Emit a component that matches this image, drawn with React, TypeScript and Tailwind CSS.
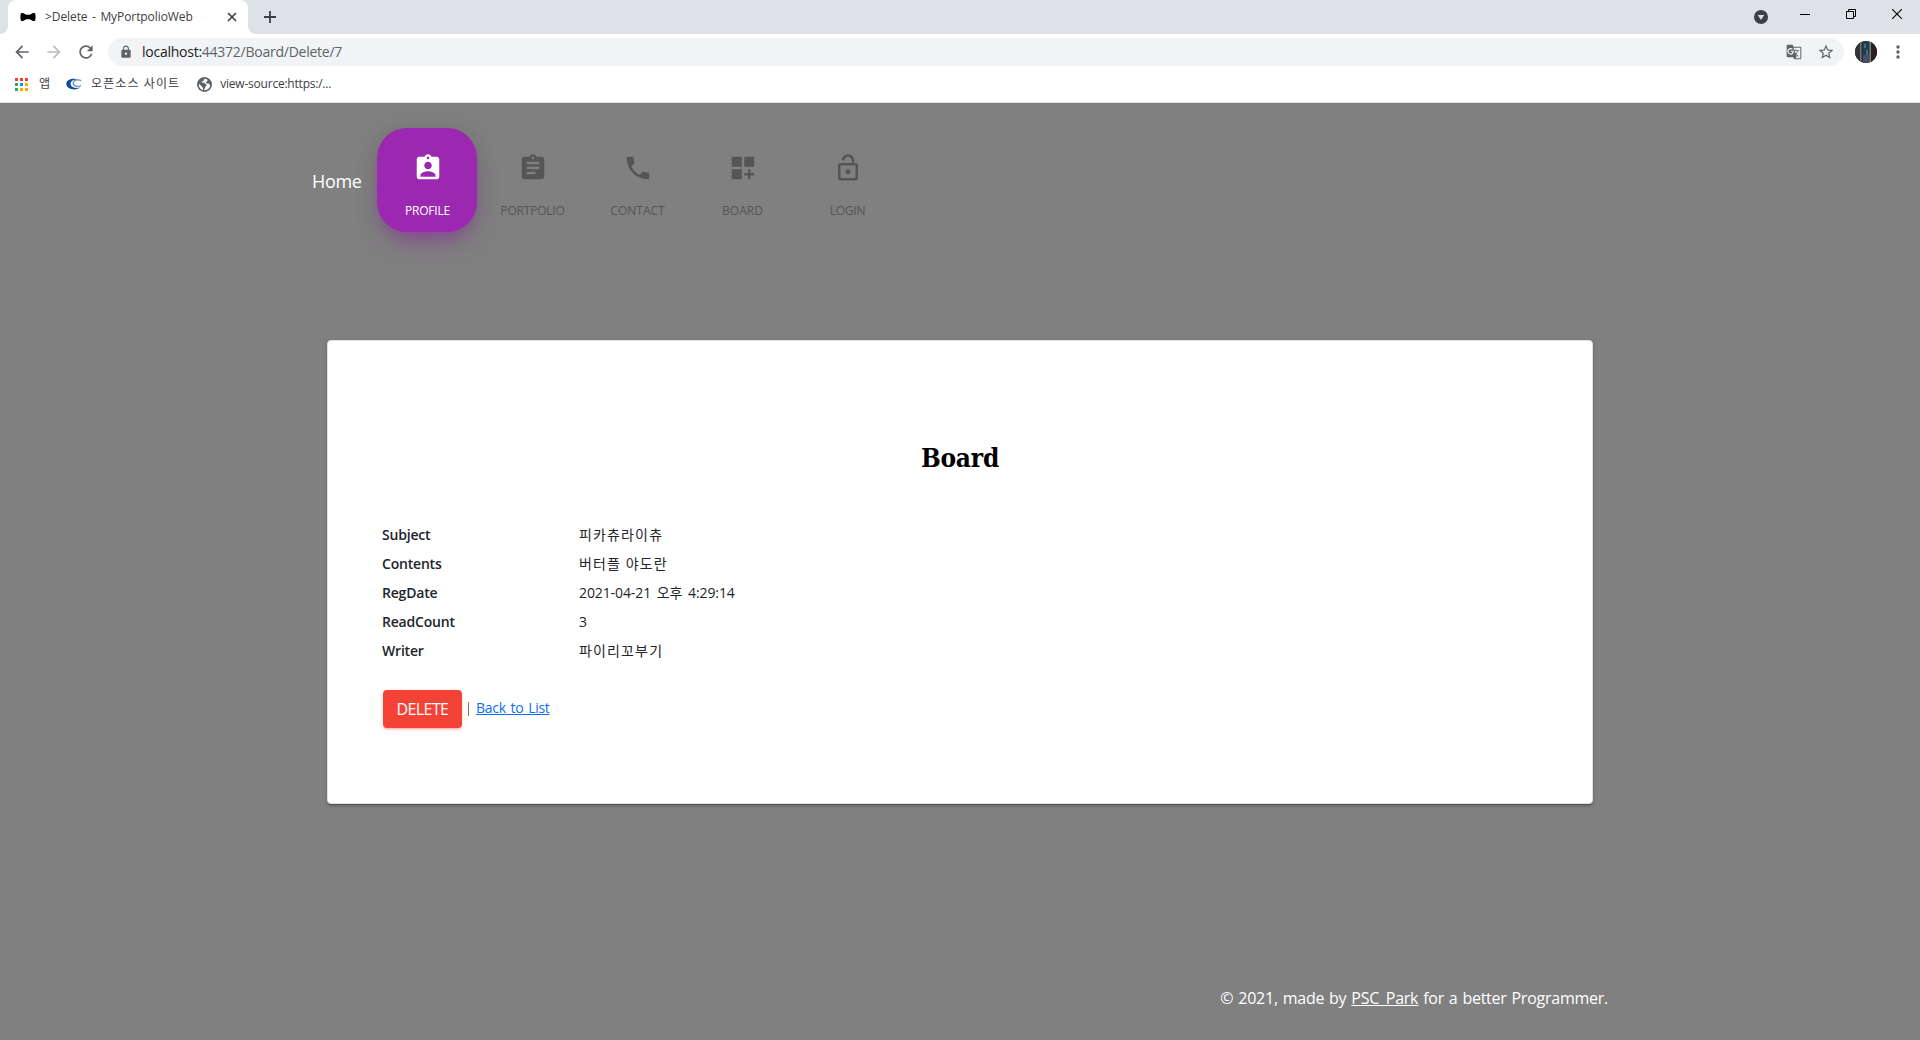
import type { ReactNode } from 'react';
import {
  MdArrowBack,
  MdArrowForward,
  MdAssignment,
  MdAssignmentInd,
  MdDashboardCustomize,
  MdGTranslate,
  MdLock,
  MdLockOpen,
  MdMoreVert,
  MdPhone,
  MdRefresh,
  MdStarBorder,
} from 'react-icons/md';

function BowTie() {
  return (
    <svg width="16" height="16" viewBox="0 0 16 16" className="shrink-0">
      <path
        d="M.6 5.200C.8 3.900 2 3.700 3 4.100l3.300 1.700h3.400L13 4.100c1-.4 2.200-.2 2.400 1.100.2 2 .2 3.600 0 5.600-.2 1.300-1.400 1.500-2.400 1.100L9.700 10.200H6.300L3 11.900c-1 .4-2.200.2-2.400-1.100-.2-2-.2-3.600 0-5.600z"
        fill="#000"
      />
    </svg>
  );
}

function Globe() {
  return (
    <svg width="15" height="15" viewBox="0 0 15 15" className="ml-[17px]">
      <circle cx="7.500" cy="7.500" r="7.200" fill="#5f6368" />
      <path
        d="M7.200 1.600c-.3 1 .4 1.500-.6 2.100-.8.500-1.900.3-1.900 1.200 0 1.200 2.900.3 3.300 1.500.2.800 1.800.6 1.800 1.700 0 .9-1.300 1-1.500 2-.2 1.300-1 2.500-1.900 3.200 3.600.5 6.900-2 7-5.600-.9.200-1.300-.8-2.200-1.200-.8-.4-2 .2-2.300-.8-.3-1 1.300-.9 1.500-1.800.1-.6-.3-1.100.1-1.600-1-.6-2.200-.8-3.300-.7z"
        fill="#fff"
      />
      <path d="M1.500 6.500l3.200 2.800c.4.400.2 1 .9 1.300.5.300.4 1.300.3 2.700-2.600-.6-4.900-3.500-4.400-6.800z" fill="#fff" />
      <circle cx="7.500" cy="7.500" r="6.600" fill="none" stroke="#5f6368" strokeWidth="1.500" />
    </svg>
  );
}

function TabStrip() {
  return (
    <div className="flex h-[34px] bg-[#dee1e6]">
      <div className="flex w-2 bg-white">
        <div className="w-2 rounded-br-[8px] bg-[#dee1e6]" />
      </div>
      <div className="flex h-[34px] w-[240px] items-center rounded-t-[8px] bg-white pr-[10px] pl-3">
        <BowTie />
        <span className="ml-[9px] flex-1 whitespace-nowrap text-[12px] tracking-[-0.080px] text-[#3c4043] [word-spacing:1.500px]">
          &gt;Delete - MyPortpolioWeb
        </span>
        <svg width="10" height="10" viewBox="0 0 10 10" className="mr-px">
          <path d="M1 1l8 8M9 1L1 9" stroke="#3c4043" strokeWidth="1.700" />
        </svg>
      </div>
      <div className="flex w-2 bg-white">
        <div className="w-2 rounded-bl-[8px] bg-[#dee1e6]" />
      </div>
      <svg width="12" height="12" viewBox="0 0 12 12" className="mt-[11px] ml-2">
        <path d="M6 0v12M0 6h12" stroke="#3c4043" strokeWidth="1.800" />
      </svg>
      <div className="ml-auto flex">
        <svg width="14" height="14" viewBox="0 0 14 14" className="mt-[10px] mr-8">
          <circle cx="7" cy="7" r="7" fill="#3c4043" />
          <path d="M3.800 5.100h6.400L7 10z" fill="#dee1e6" />
        </svg>
        <svg width="10" height="10" viewBox="0 0 10 10" className="mt-[9px] mr-9">
          <path d="M0 5.500h10" stroke="#000" />
        </svg>
        <svg width="10" height="10" viewBox="0 0 10 10" className="mt-[9px] mr-9" fill="none" stroke="#000">
          <path d="M.5 2.500h7v7h-7zM2.500 2.500v-2h7v7h-2" />
        </svg>
        <svg width="10" height="10" viewBox="0 0 10 10" className="mt-[9px] mr-[18px]">
          <path d="M0 0l10 10M10 0L0 10" stroke="#000" strokeWidth="1.100" />
        </svg>
      </div>
    </div>
  );
}

function Toolbar() {
  return (
    <div className="flex h-9 items-center bg-white text-[#5f6368]">
      <MdArrowBack className="ml-3 size-5" />
      <MdArrowForward className="ml-3 size-5 text-[#babcbe]" />
      <MdRefresh className="ml-3 size-5" />
      <div className="ml-3 flex h-7 w-[1736px] items-center rounded-full bg-[#f1f3f4] pl-[11px]">
        <MdLock className="size-[14px]" />
        <span className="-mt-px ml-[9px] whitespace-nowrap text-[14px] tracking-[-0.250px]">
          <span className="text-[#202124]">localhost:</span>44372/Board/Delete/7
        </span>
        <MdGTranslate className="ml-auto size-4" />
        <MdStarBorder className="mr-[9px] ml-[15px] size-[18px]" />
      </div>
      <svg width="22" height="22" viewBox="0 0 22 22" className="ml-[11px]">
        <defs>
          <clipPath id="avatar">
            <circle cx="11" cy="11" r="11" />
          </clipPath>
        </defs>
        <g clipPath="url(#avatar)">
          <path d="M0 0h22v22H0z" fill="#22303c" />
          <path d="M0 0h5v22H0z" fill="#30343b" />
          <path d="M5 0h1.500v22H5z" fill="#71746f" />
          <path d="M8 0h6v22H8z" fill="#203f4e" />
          <path d="M9 3h2v4H9zM11 9h2v5h-2z" fill="#407080" />
          <path d="M8 14h6v8H8z" fill="#4b4d6d" />
          <path d="M14.500 0H16v22h-1.500z" fill="#827f75" />
          <path d="M16 0h6v22h-6z" fill="#2c2022" />
        </g>
      </svg>
      <MdMoreVert className="ml-[11px] size-5" />
    </div>
  );
}

const appDots = ['#ea4335', '#ea4335', '#ea4335', '#34a853', '#1a8cff', '#fbab00', '#34a853', '#fbab00', '#fbab00'];

function Bookmarks() {
  return (
    <div className="flex h-[33px] items-center border-b border-[#dcdde0] bg-white pb-1 text-[12px] whitespace-nowrap text-[#3c4043]">
      <div className="ml-[15px] grid grid-cols-3 gap-[2px]">
        {appDots.map((c, i) => (
          <i key={i} className="size-[3px]" style={{ background: c }} />
        ))}
      </div>
      <span className="ml-[11px]">앱</span>
      <svg width="17" height="12" viewBox="0 0 17 12" className="ml-4" fill="none">
        <path
          d="M14 1.800C8.500-.6 0 .8.300 5.800.6 11.500 9.500 13 14.300 9.600 10 10.800 5 9.400 4.600 6 4.200 2.400 9.500.800 14 1.800z"
          fill="#134b9b"
        />
        <path d="M15.200 2.700C12 1 7.200 2 7.200 5.300c0 3 4.500 4.200 8 2.200" stroke="#7396c6" strokeWidth="1.400" />
      </svg>
      <span className="ml-2 tracking-[1.100px]">오픈소스 사이트</span>
      <Globe />
      <span className="ml-2 tracking-[-0.220px]">view-source:https:/...</span>
    </div>
  );
}

function NavItem({ icon, active, children }: { icon: ReactNode; active?: boolean; children: ReactNode }) {
  return (
    <a
      className={`flex h-[104px] w-[100px] flex-col items-center rounded-[30px] pl-px text-[12px] leading-[18px] ${
        active
          ? 'bg-[#9c27b0] text-white shadow-[0_16px_26px_-10px_rgba(156,39,176,0.56),0_4px_25px_0px_rgba(0,0,0,0.12),0_8px_10px_-5px_rgba(156,39,176,0.2)]'
          : 'text-[#555]'
      }`}
    >
      <span className="mt-[25px] h-[30px] text-[30px]">{icon}</span>
      <span className="mt-[19px]">{children}</span>
    </a>
  );
}

const rows = [
  ['Subject', '피카츄라이츄'],
  ['Contents', '버터플 야도란'],
  ['RegDate', '2021-04-21 오후 4:29:14'],
  ['ReadCount', '3'],
  ['Writer', '파이리꼬부기'],
];
const valueTracking = [
  'tracking-[1.150px]',
  'tracking-[1.100px]',
  'tracking-[-0.100px] [word-spacing:2.200px]',
  '',
  'tracking-[1.150px]',
];

export default function App() {
  return (
    <div className="flex h-[1040px] w-[1920px] flex-col overflow-hidden bg-[#808080] font-['Open_Sans','Noto_Sans_CJK_KR',sans-serif]">
      <TabStrip />
      <Toolbar />
      <Bookmarks />

      <nav className="mt-[25px] flex items-center pl-[312px]">
        <a className="mt-[2px] w-[65px] text-[18px] tracking-[-0.350px] text-white">Home</a>
        <div className="flex gap-[5px]">
          <NavItem active icon={<MdAssignmentInd />}>
            <span className="tracking-[-0.200px]">PROFILE</span>
          </NavItem>
          <NavItem icon={<MdAssignment />}>
            <span className="tracking-[-0.200px]">PORTPOLIO</span>
          </NavItem>
          <NavItem icon={<MdPhone />}>CONTACT</NavItem>
          <NavItem icon={<MdDashboardCustomize />}>BOARD</NavItem>
          <NavItem icon={<MdLockOpen />}>
            <span className="tracking-[-0.200px]">LOGIN</span>
          </NavItem>
        </div>
      </nav>

      <main className="mx-[327px] mt-[108px] h-[464px] rounded-[4px] border border-[#dfdfdf] bg-white px-[54px] text-[14px] text-[#212529] shadow-[0_2px_2px_0_rgba(0,0,0,0.14),0_3px_1px_-2px_rgba(0,0,0,0.2),0_1px_5px_0_rgba(0,0,0,0.12)]">
        <h2 className="mt-[97px] text-center font-['DejaVu_Serif_Condensed','DejaVu_Serif',serif] text-[26px] leading-[40px] font-bold tracking-[-0.200px] text-black">
          Board
        </h2>
        <dl className="mt-[42px] grid grid-cols-[197px_1fr] leading-[29px]">
          {rows.map(([label, value], i) => (
            <div key={label} className="contents">
              <dt className="h-[29px] font-semibold tracking-[-0.200px]">{label}</dt>
              <dd className={`h-[29px] ${valueTracking[i]}`}>{value}</dd>
            </div>
          ))}
        </dl>
        <div className="mt-[25px] flex items-center pl-px">
          <button className="h-[38px] w-[79px] rounded-[4px] bg-[#f44336] text-[16px] tracking-[-0.600px] text-white shadow-[0_2px_2px_0_rgba(244,67,54,0.14),0_3px_1px_-2px_rgba(244,67,54,0.2),0_1px_5px_0_rgba(244,67,54,0.12)]">
            DELETE
          </button>
          <span className="ml-[6px] h-[14px] w-px bg-[#a4625a]" />
          <a className="-mt-[3px] ml-[7px] tracking-[-0.300px] text-[#0d6efd] underline [word-spacing:1.500px]">Back to List</a>
        </div>
      </main>

      <footer className="mt-auto mr-[312px] mb-[30px] text-right text-[16px] tracking-[-0.250px] text-white [word-spacing:1px]">
        © 2021, made by <a className="underline">PSC_Park</a> for a better Programmer.
      </footer>
    </div>
  );
}
